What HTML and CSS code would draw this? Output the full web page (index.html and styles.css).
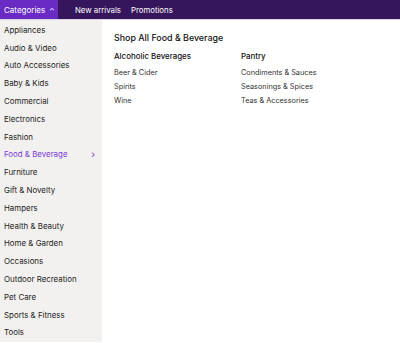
FILE: index.html
```html
<!DOCTYPE html>
<html lang="en">
<head>
  <meta charset="UTF-8" />
  <title>Categories</title>
  <link rel="stylesheet" href="styles.css">
</head>
<body>
  <header class="topbar">
    <button class="cat-button">Categories <span class="caret">&#8963;</span></button>
    <nav class="top-links">
      <a href="#">New arrivals</a>
      <a href="#">Promotions</a>
    </nav>
  </header>

  <div class="mega">
    <ul class="side-list">
      <li>Appliances</li>
      <li>Audio &amp; Video</li>
      <li>Auto Accessories</li>
      <li>Baby &amp; Kids</li>
      <li>Commercial</li>
      <li>Electronics</li>
      <li>Fashion</li>
      <li class="active">Food &amp; Beverage <span class="chev">&#8250;</span></li>
      <li>Furniture</li>
      <li>Gift &amp; Novelty</li>
      <li>Hampers</li>
      <li>Health &amp; Beauty</li>
      <li>Home &amp; Garden</li>
      <li>Occasions</li>
      <li>Outdoor Recreation</li>
      <li>Pet Care</li>
      <li>Sports &amp; Fitness</li>
      <li>Tools</li>
    </ul>

    <section class="panel">
      <h2>Shop All Food &amp; Beverage</h2>
      <div class="cols">
        <div class="col">
          <h3>Alcoholic Beverages</h3>
          <a href="#">Beer &amp; Cider</a>
          <a href="#">Spirits</a>
          <a href="#">Wine</a>
        </div>
        <div class="col">
          <h3>Pantry</h3>
          <a href="#">Condiments &amp; Sauces</a>
          <a href="#">Seasonings &amp; Spices</a>
          <a href="#">Teas &amp; Accessories</a>
        </div>
      </div>
    </section>
  </div>
</body>
</html>
```

FILE: styles.css
```css
* {
    margin: 0;
    padding: 0;
    box-sizing: border-box;
}
body {
    font-family: 'Inter', 'Liberation Sans', sans-serif;
    background: #fff;
    color: #222;
    width: 400px;
    height: 343px;
    overflow: hidden;
}
.topbar {
    display: flex;
    align-items: stretch;
    height: 20px;
    background: #35165c;
    border-bottom: 1px solid #d9d4e0;
}
.cat-button {
    display: flex;
    align-items: center;
    gap: 4px;
    width: 58px;
    padding-left: 4px;
    background: #6a2bc4;
    border: none;
    color: #fff;
    font-family: inherit;
    font-size: 8px;
}
.caret {
    font-size: 7px;
    line-height: 1;
    padding-top: 3px;
}
.top-links {
    display: flex;
    align-items: center;
    gap: 10px;
    padding-left: 17px;
}
.top-links a {
    color: #fff;
    text-decoration: none;
    font-size: 7.8px;
}
.mega {
    display: flex;
}
.side-list {
    list-style: none;
    width: 102px;
    background: #f3f1ef;
    padding-top: 1px;
    height: 322px;
}
.side-list li {
    display: flex;
    justify-content: space-between;
    align-items: center;
    height: 17.8px;
    padding: 0 5px 0 4px;
    font-size: 7.9px;
    color: #222;
}
.side-list li.active {
    color: #7b3ad8;
}
.chev {
    font-size: 10px;
    padding-right: 2px;
}
.panel {
    padding: 12px 0 0 12px;
}
.panel h2 {
    font-size: 8.9px;
    font-weight: 500;
    color: #111;
    margin-bottom: 8px;
}
.cols {
    display: flex;
}
.col {
    display: flex;
    flex-direction: column;
    width: 127px;
}
.col h3 {
    font-size: 7.9px;
    font-weight: 500;
    color: #111;
    margin-bottom: 5px;
}
.col a {
    font-size: 7.3px;
    color: #333;
    text-decoration: none;
    line-height: 14px;
}
```
